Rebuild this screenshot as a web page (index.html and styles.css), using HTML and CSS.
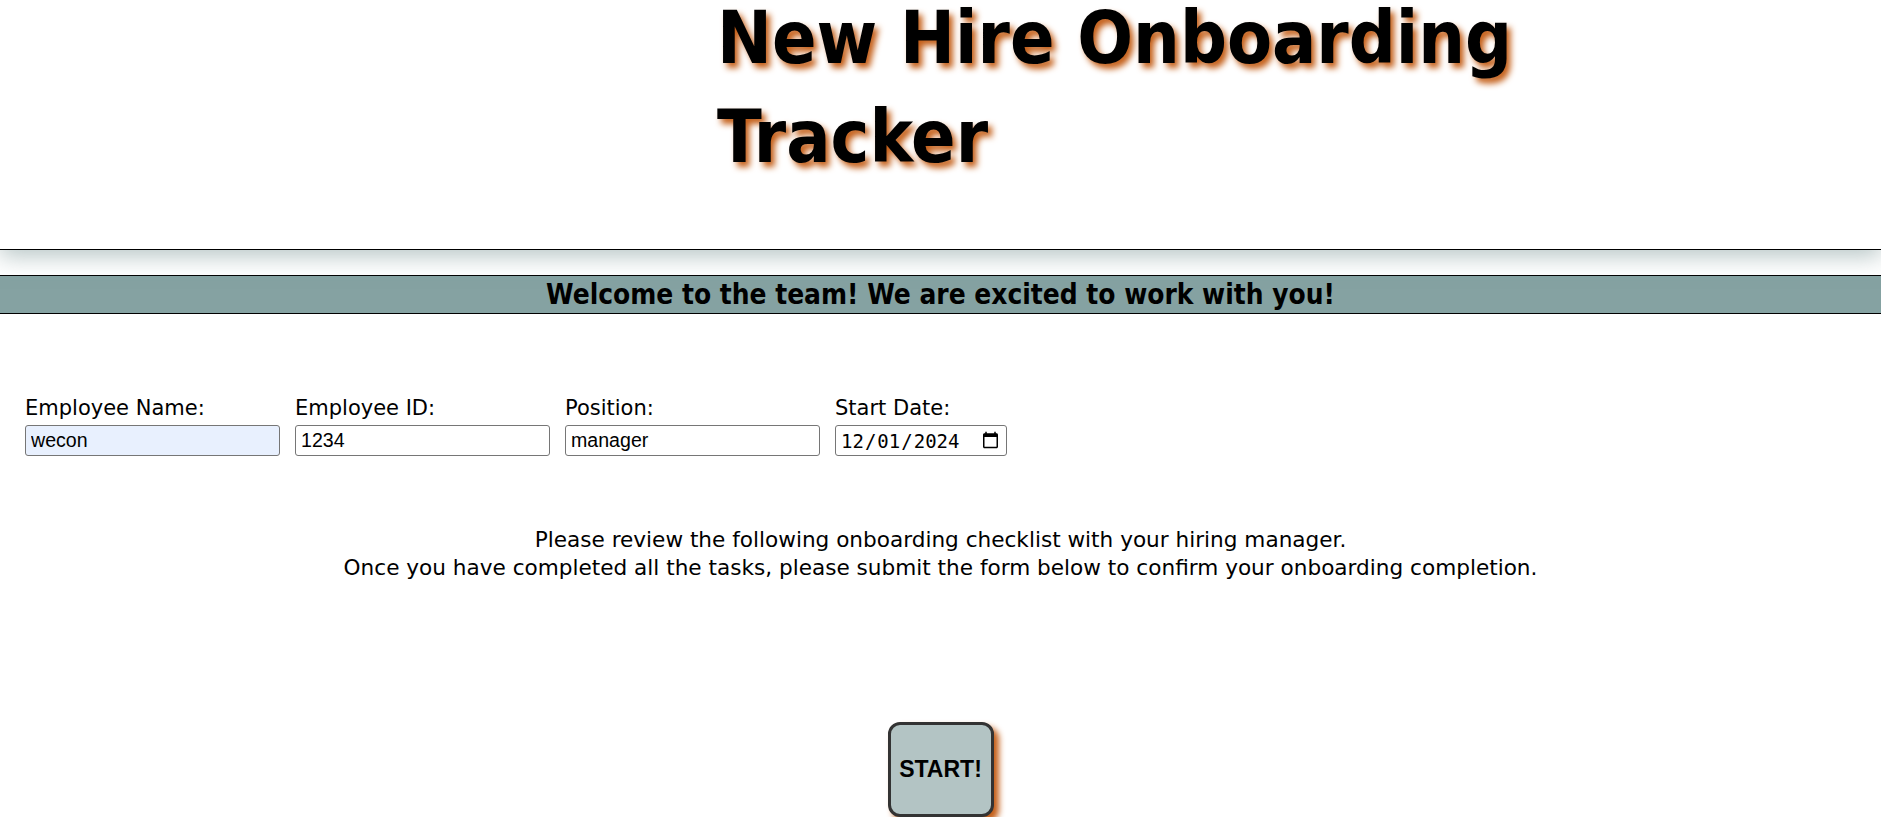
FILE: index.html
```html
<!DOCTYPE html>
<html lang="en">
<head>
<meta charset="utf-8">
<title>New Hire Onboarding Tracker</title>
<link rel="stylesheet" href="styles.css">
</head>
<body>
<header class="site-header">
  <h1 class="title">New Hire Onboarding Tracker</h1>
</header>
<nav class="welcome-bar">Welcome to the team! We are excited to work with you!</nav>
<main class="content">
  <form class="info-form">
    <div class="field">
      <label class="field-label" for="name">Employee Name:</label>
      <input class="field-input autofilled" id="name" type="text" value="wecon">
    </div>
    <div class="field">
      <label class="field-label" for="eid">Employee ID:</label>
      <input class="field-input" id="eid" type="text" value="1234">
    </div>
    <div class="field">
      <label class="field-label" for="pos">Position:</label>
      <input class="field-input" id="pos" type="text" value="manager">
    </div>
    <div class="field">
      <label class="field-label" for="date">Start Date:</label>
      <input class="field-input date-input" id="date" type="date" value="2024-12-01">
    </div>
  </form>
  <p class="intro">Please review the following onboarding checklist with your hiring manager.<br>Once you have completed all the tasks, please submit the form below to confirm your onboarding completion.</p>
  <div class="start-wrap">
    <button class="start-btn" type="button">START!</button>
  </div>
</main>
</body>
</html>
```
FILE: styles.css
```css
html, body {
  margin: 0;
  padding: 0;
  background: #ffffff;
  overflow: hidden;
}
body {
  font-family: "DejaVu Sans", "Liberation Sans", sans-serif;
  color: #000;
}
.site-header {
  display: flow-root;
  border-bottom: 1px solid #000;
  box-shadow: 0 6px 22px rgba(110, 140, 140, 0.5);
  height: 249px;
  background: #fff;
  position: relative;
  z-index: 1;
}
.title {
  margin: -12px 0 0 717px;
  max-width: 820px;
  font-size: 73px;
  font-stretch: condensed;
  line-height: 99px;
  font-weight: bold;
  text-shadow: 4px 5px 6px #c45e17;
}
.welcome-bar {
  margin-top: 25px;
  background: #85a2a2;
  border-top: 1px solid #000;
  border-bottom: 1px solid #000;
  height: 37px;
  line-height: 37px;
  text-align: center;
  font-weight: bold;
  font-stretch: condensed;
  font-size: 27.8px;
}
.content {
  padding: 0 25px;
}
.info-form {
  display: flex;
  gap: 15px;
  margin-top: 82px;
}
.field {
  display: flex;
  flex-direction: column;
}
.field-label {
  font-size: 21px;
  line-height: 24px;
  margin-bottom: 5px;
}
.field-input {
  width: 255px;
  height: 31px;
  box-sizing: border-box;
  font-family: "Liberation Sans", Arial, sans-serif;
  font-size: 19.6px;
  padding: 2px 5px;
  border: 1px solid #767676;
  border-radius: 3px;
  background: #fff;
  color: #000;
}
.autofilled {
  background: #e8f0fe;
}
.date-input {
  width: 172px;
  font-family: "DejaVu Sans Mono", "Liberation Mono", monospace;
  font-size: 19px;
  padding: 2px 4px;
}
.intro {
  text-align: center;
  font-size: 21.6px;
  line-height: 28px;
  margin: 70px 0 0;
}
.start-wrap {
  display: flex;
  justify-content: center;
  margin-top: 140px;
}
.start-btn {
  width: 106px;
  height: 95px;
  border: 3px solid #333;
  border-radius: 12px;
  background: #b3c4c4;
  box-shadow: 5px 5px 6px #c45e17;
  font-family: "Liberation Sans", Arial, sans-serif;
  font-weight: bold;
  font-size: 23px;
  color: #000;
}
```
